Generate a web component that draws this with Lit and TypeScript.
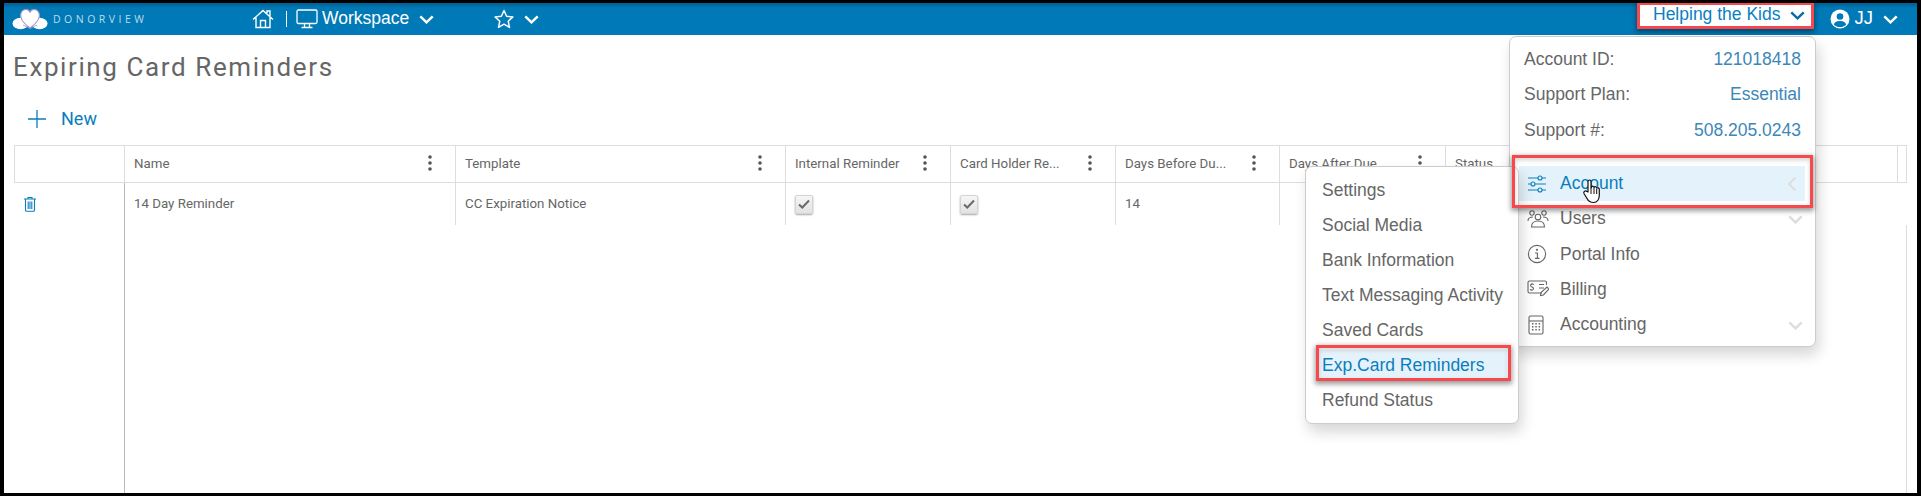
import { LitElement, html, css, svg } from "lit";
import { customElement } from "lit/decorators.js";

const chevDown = (cls = "chev") => html`<svg class=${cls} viewBox="0 0 15 9" width="15" height="9"><path d="M1.300 1.300 7.500 7.300 13.700 1.300" fill="none" stroke="currentColor" stroke-width="2.500"/></svg>`;
const dots = html`<svg class="dots" viewBox="0 0 4 18" width="4" height="18"><circle cx="2" cy="3" r="1.800"/><circle cx="2" cy="9" r="1.800"/><circle cx="2" cy="15" r="1.800"/></svg>`;
const check = html`<span class="cb"><svg viewBox="0 0 14 14" width="14" height="14"><path d="M2 7.500 5.300 10.500 12 3.500" fill="none" stroke="#6a6a6a" stroke-width="2"/></svg></span>`;

const icons: Record<string, unknown> = {
  sliders: svg`<g fill="none" stroke="currentColor" stroke-width="1.100"><path d="M1 4h10M15 4h4M1 10h3M8 10h11M1 16h10M15 16h4"/><circle cx="13" cy="4" r="2"/><circle cx="6" cy="10" r="2"/><circle cx="13" cy="16" r="2"/></g>`,
  users: svg`<g fill="none" stroke="currentColor" stroke-width="1.100"><circle cx="5" cy="4" r="2.200"/><circle cx="17" cy="4" r="2.200"/><circle cx="11" cy="8" r="2.800"/><path d="M1 12c0-3 2-4 5-4M21 12c0-3-2-4-5-4M4.500 18c0-4 2.500-6 6.500-6s6.500 2 6.500 6z"/></g>`,
  info: svg`<g fill="none" stroke="currentColor" stroke-width="1.100"><circle cx="10" cy="10" r="8.600"/><path d="M8 9h2.400v5M8 14.400h4.500" /></g><circle cx="10" cy="5.800" r="1.100" fill="currentColor"/>`,
  billing: svg`<g fill="none" stroke="currentColor" stroke-width="1.100"><path d="M15 14H2.500Q1 14 1 12.500V3.500Q1 2 2.500 2H18Q19.500 2 19.500 3.500V6"/><path d="M12 9h5M12 5.500h5M5 12v-1M5 5V4M7 5.500Q5 4.500 3.800 5.500 3 7 5 8 7 9 6.300 10.300 5 11.500 3 10.500"/><path d="M13.500 16.500 14 13.500 20 8l2 2-5.600 6z"/></g>`,
  calc: svg`<g fill="none" stroke="currentColor" stroke-width="1.100"><rect x="2" y="1" width="14" height="18" rx="1.500"/><path d="M2 6h14"/></g><g fill="currentColor"><rect x="5" y="8" width="1.500" height="1.500"/><rect x="8.300" y="8" width="1.500" height="1.500"/><rect x="11.600" y="8" width="1.500" height="1.500"/><rect x="5" y="11" width="1.500" height="1.500"/><rect x="8.300" y="11" width="1.500" height="1.500"/><rect x="11.600" y="11" width="1.500" height="1.500"/><rect x="5" y="14" width="1.500" height="1.500"/><rect x="8.300" y="14" width="1.500" height="1.500"/><rect x="11.600" y="14" width="1.500" height="1.500"/></g>`,
};
const icon = (name: string) => html`<svg class="mi" viewBox="0 0 22 20" width="22" height="20">${icons[name]}</svg>`;

const COLS = [
  { t: "", w: 111 },
  { t: "Name", w: 331, d: true },
  { t: "Template", w: 330, d: true },
  { t: "Internal Reminder", w: 165, d: true },
  { t: "Card Holder Re...", w: 165, d: true },
  { t: "Days Before Du...", w: 164, d: true },
  { t: "Days After Due", w: 166, d: true },
  { t: "Status", w: 452 },
  { t: "", w: 8 },
];

@customElement("app-root")
export class AppRoot extends LitElement {
  static styles = css`
    :host { display: block; width: 1921px; height: 496px; box-sizing: border-box; background: #000; padding: 3px 4px 3px 4px; font-family: "Liberation Sans", Arial, sans-serif; overflow: hidden; }
    .page { position: relative; height: 490px; background: #fff; overflow: hidden; display: flex; flex-direction: column; }
    .bar { height: 32px; flex: none; background: linear-gradient(#005d8e 0, #0079b6 5px, #007ab8 100%); color: #fff; display: flex; align-items: center; font-size: 17.500px; }
    .logo { margin-left: 8px; display: block; }
    .brand { margin-left: 5px; font-size: 10.500px; letter-spacing: 3.500px; color: #bcdcec; font-family: "Open Sans", sans-serif; width: 100px; white-space: nowrap; }
    .home { margin-left: 99px; display: block; }
    .sep { margin-left: 12px; width: 1px; height: 16px; background: #fff; }
    .mon { margin-left: 9px; display: block; }
    .ws { margin-left: 4px; position: relative; top: -1px; }
    .chev { display: block; color: #fff; }
    .c1 { margin-left: 10px; }
    .star { margin-left: 60px; display: block; }
    .c2 { margin-left: 10px; }
    .spacer { flex: 1; }
    .hk { color: #0a80c2; position: relative; top: -1px; }
    .user { margin-left: 12px; display: block; margin-right: -3px; position: relative; left: -5px; }
    .jj { margin-left: 3px; font-size: 18.500px; position: relative; top: -1px; }
    .c3 { margin-left: 10px; margin-right: 19px; }
    .main { flex: 1; display: flex; flex-direction: column; padding-left: 9px; padding-right: 10px; min-height: 0; }
    h1 { margin: 17px 0 0 0; font: 400 26px/30px Roboto, sans-serif; letter-spacing: 1.600px; color: #666; }
    .new { margin: 25px 0 0 15px; display: flex; align-items: center; height: 24px; color: #0a7ebd; font: 400 18px/24px Roboto, sans-serif; }
    .new svg { display: block; margin-right: 15px; }
    .table { margin: 14px 0 0 1px; flex: 1; display: flex; flex-direction: column; font: 400 13.300px/16px Roboto, sans-serif; color: #666; min-height: 0; }
    .head { display: flex; height: 36px; border-top: 1px solid #ddd; border-bottom: 1px solid #ddd; flex: none; border-left: 1px solid #ddd; border-right: 1px solid #ddd; }
    .row { display: flex; height: 42px; flex: none; }
    .fill { flex: 1; display: flex; }
    .cell { box-sizing: border-box; display: flex; align-items: center; padding: 0 9px 0 9px; border-right: 1px solid #ddd; flex: none; justify-content: space-between; white-space: nowrap; }
    .head .cell:last-child { border-right: 0; }
    .row .cell:first-child { border-right: 1px solid #bbb; }
    .dots { fill: #555; display: block; margin-right: 14px; margin-top: -3px; }
    .trash { display: block; margin-left: 0; }
    .cb { width: 18px; height: 19px; box-sizing: border-box; border: 1px solid #d4d4d4; border-radius: 2px; background: linear-gradient(#f6f6f6, #e2e2e2); box-shadow: 0 1px 2px rgba(0,0,0,.35); display: flex; align-items: center; justify-content: center; }
    .first { width: 111px; box-sizing: border-box; flex: none; }
    .rightline { width: 1px; background: #ddd; margin-left: auto; }
    .vline { border-right: 1px solid #bbb; }

    .menu { position: absolute; background: #fff; border: 1px solid #ccc; border-radius: 7px; box-sizing: border-box; box-shadow: 3px 8px 14px rgba(0,0,0,.16); font-size: 17.500px; color: #666; display: flex; flex-direction: column; }
    .acct { left: 1505px; top: 33px; width: 307px; height: 311px; padding-top: 5px; }
    .kv { display: flex; justify-content: space-between; height: 35.300px; align-items: center; padding: 0 14px 0 14px; flex: none; }
    .kv b { font-weight: 400; color: #3d87b7; }
    .mrow { display: flex; align-items: center; height: 35.300px; flex: none; padding-left: 17px; position: relative; }
    .mrow .mi { margin-right: 11px; flex: none; color: #666; display: block; }
    .mrow.on { background: #e4f3fb; color: #0a7ebd; margin: 18px 10px 0 9px; padding-left: 8px; }
    .mrow.on .mi { color: #0a7ebd; }
    .rc { position: absolute; right: 12px; color: #ddd; display: block; }
    .on .rc { right: 8px; }
    .sub { left: 1301px; top: 163px; width: 214px; height: 258px; padding-top: 6px; }
    .sub .s { height: 35px; flex: none; display: flex; align-items: center; padding-left: 16px; }
    .sub .s.on { background: #e4f3fb; color: #0a7ebd; margin: 2px 11px 3px 12px; height: 30px; padding-left: 4px; }

    .red { position: absolute; border: 3px solid #f6484d; box-sizing: border-box; box-shadow: 0 2px 5px 1px rgba(0,0,0,.4), inset 0 2px 4px rgba(0,0,0,.18); pointer-events: none; }
    .r1 { left: 1633px; top: 0; width: 177px; height: 26px; border-top-width: 2px; background: #fff; display: flex; align-items: center; font-size: 17.500px; box-shadow: 0 2px 5px 1px rgba(0,0,0,.4); }
    .r1 .hk { margin-left: 13px; }
    .r1 .chev { color: #0a6ea8; margin-left: 10px; }
    .r2 { left: 1508px; top: 152px; width: 301px; height: 53px; }
    .r3 { left: 1312px; top: 342px; width: 195px; height: 36px; }
    .hand { position: absolute; left: 1578px; top: 175px; display: block; }
  `;

  render() {
    return html`<div class="page">
      <div class="bar">
        <svg class="logo" viewBox="0 0 36 22" width="36" height="22">
          <ellipse cx="8.500" cy="15.500" rx="8" ry="5.800" fill="#fff"/><ellipse cx="27.500" cy="15.500" rx="8" ry="5.800" fill="#fff"/>
          <path d="M18 20C11 15 7 10 9 5 11 .500 17 .500 18 4.500 19 .500 25 .500 27 5 29 10 25 15 18 20Z" fill="#fff" stroke="#a995c8" stroke-width="1.100"/>
          <path d="M11 17 18 20.500 25 17" fill="none" stroke="#a995c8" stroke-width=".800"/>
        </svg>
        <span class="brand">DONORVIEW</span>
        <svg class="home" viewBox="0 0 22 20" width="22" height="20"><path d="M1 10.500 11 1.500 21 10.500M4 8.500V18.500H18V8.500M8.500 18.500V11.500H13.500V18.500M15 4V2H18V7" fill="none" stroke="#fff" stroke-width="1.400"/></svg>
        <span class="sep"></span>
        <svg class="mon" viewBox="0 0 22 20" width="22" height="20"><path d="M2.500 1H19.500Q21 1 21 2.500V13Q21 14.500 19.500 14.500H2.500Q1 14.500 1 13V2.500Q1 1 2.500 1ZM8.500 14.500V18M13.500 14.500V18M5.500 18.500H16.500" fill="none" stroke="#fff" stroke-width="1.300"/></svg>
        <span class="ws">Workspace</span>
        <span class="c1">${chevDown()}</span>
        <svg class="star" viewBox="0 0 20 20" width="20" height="20"><path d="M10 1.500 12.600 7.300 18.900 8 14.200 12.200 15.500 18.400 10 15.200 4.500 18.400 5.800 12.200 1.100 8 7.400 7.300Z" fill="none" stroke="#fff" stroke-width="1.500" stroke-linejoin="round"/></svg>
        <span class="c2">${chevDown()}</span>
        <span class="spacer"></span>
        <svg class="user" viewBox="0 0 20 20" width="20" height="20"><circle cx="10" cy="10" r="9.500" fill="#fff"/><circle cx="10" cy="7.500" r="3.300" fill="#007ab8"/><path d="M3.800 15.500C5 12.500 7.500 12 10 12s5 .5 6.200 3.500C14.500 17.500 12 18 10 18s-4.500-.5-6.200-2.500Z" fill="#007ab8"/></svg>
        <span class="jj">JJ</span>
        <span class="c3">${chevDown()}</span>
      </div>
      <div class="main">
        <h1>Expiring Card Reminders</h1>
        <div class="new"><svg viewBox="0 0 18 18" width="18" height="18"><path d="M9 0V18M0 9H18" stroke="#0a7ebd" stroke-width="1.300"/></svg>New</div>
        <div class="table">
          <div class="head">
            ${COLS.map((c, i) => html`<div class="cell" style="width:${i === 0 ? c.w - 1 : c.w}px"><span>${c.t}</span>${c.d ? dots : ""}</div>`)}
          </div>
          <div class="row">
            <div class="cell first"><svg class="trash" viewBox="0 0 14 16" width="14" height="16"><path d="M1 3H13M5 3V1.500H9V3M2.500 3V14Q2.500 15.300 3.800 15.300H10.200Q11.500 15.300 11.500 14V3M5.200 5.500V13M7 5.500V13M8.800 5.500V13" fill="none" stroke="#0a7ebd" stroke-width="1.100"/></svg></div>
            <div class="cell" style="width:331px">14 Day Reminder</div>
            <div class="cell" style="width:330px">CC Expiration Notice</div>
            <div class="cell" style="width:165px">${check}</div>
            <div class="cell" style="width:165px">${check}</div>
            <div class="cell" style="width:164px">14</div>
          </div>
          <div class="fill"><div class="first vline"></div><div class="rightline"></div></div>
        </div>
      </div>

      <div class="menu acct">
        <div class="kv"><span>Account ID:</span><b>121018418</b></div>
        <div class="kv"><span>Support Plan:</span><b>Essential</b></div>
        <div class="kv"><span>Support #:</span><b>508.205.0243</b></div>
        <div class="mrow on">${icon("sliders")}Account<svg class="rc" viewBox="0 0 10 16" width="10" height="16"><path d="M8.500 1.500 2 8 8.500 14.500" fill="none" stroke="currentColor" stroke-width="2"/></svg></div>
        <div class="mrow">${icon("users")}Users<span class="rc">${chevDown("rc2")}</span></div>
        <div class="mrow">${icon("info")}Portal Info</div>
        <div class="mrow">${icon("billing")}Billing</div>
        <div class="mrow">${icon("calc")}Accounting<span class="rc">${chevDown("rc2")}</span></div>
      </div>

      <div class="menu sub">
        <div class="s">Settings</div>
        <div class="s">Social Media</div>
        <div class="s">Bank Information</div>
        <div class="s">Text Messaging Activity</div>
        <div class="s">Saved Cards</div>
        <div class="s on">Exp.Card Reminders</div>
        <div class="s">Refund Status</div>
      </div>

      <div class="red r1"><span class="hk">Helping the Kids</span>${chevDown()}</div>
      <div class="red r2"></div>
      <div class="red r3"></div>
      <svg class="hand" viewBox="0 0 20 26" width="20" height="26"><path d="M6 14V3.500C6 1.500 9 1.500 9 3.500V10.500L9.500 9C10 7.800 12 8 12 9.500 12.500 8.300 14.500 8.500 14.700 10.200 15.500 9.400 17.300 9.800 17.300 11.500V17C17.300 21 15.500 24.500 11.500 24.500 8 24.500 6.500 23.500 5 20.500L2 15.500C1 13.500 3.500 12 5 13.500Z" fill="#fff" stroke="#111" stroke-width="1.200" stroke-linejoin="round"/><path d="M9 11V16M12 10V16M14.700 11V16" stroke="#111" stroke-width="1"/></svg>
    </div>`;
  }
}
